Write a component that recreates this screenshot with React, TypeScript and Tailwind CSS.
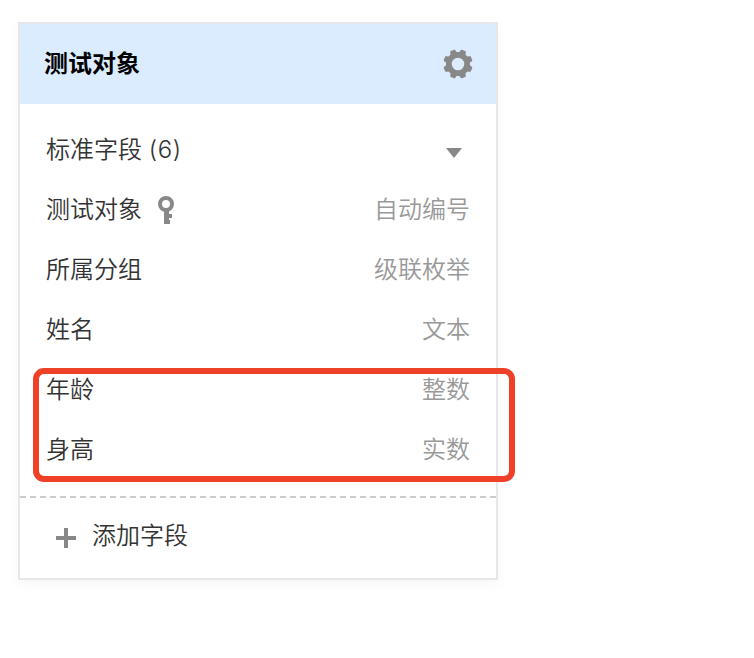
interface Field {
  name: string;
  type: string;
  isKey?: boolean;
}

const fields: Field[] = [
  { name: '测试对象', type: '自动编号', isKey: true },
  { name: '所属分组', type: '级联枚举' },
  { name: '姓名', type: '文本' },
  { name: '年龄', type: '整数' },
  { name: '身高', type: '实数' },
];

function GearIcon() {
  return (
    <svg className="w-[28px] h-[28px] overflow-visible" viewBox="0 0 28 28" fill="none">
      <circle cx="14" cy="14" r="9.1" stroke="#888" strokeWidth="5.6" />
      {[22.5, 67.5, 112.5, 157.5, 202.5, 247.5, 292.5, 337.5].map((angle) => (
        <path
          key={angle}
          d="M9.8 4.2Q11.1 2.4 11.1.6Q11.2-.7 12.4-.7h3.2Q16.8-.7 16.9.6Q16.9 2.4 18.2 4.2z"
          fill="#888"
          transform={`rotate(${angle} 14 14)`}
        />
      ))}
    </svg>
  );
}

function KeyIcon() {
  return (
    <svg className="ml-4 w-[16px] h-[28px]" viewBox="0 0 16 28" fill="none">
      <circle cx="8" cy="8" r="6" stroke="#888" strokeWidth="4" />
      <path d="M6 14h5v4h3v4h-3v2h1v4H6z" fill="#888" />
    </svg>
  );
}

export default function App() {
  return (
    <div className="w-full h-[658px] bg-white pt-[22px] pl-[18px] font-['Inter','Noto_Sans_CJK_SC',sans-serif] text-2xl text-[#333]">
      <div className="relative w-[480px] h-[558px] flex flex-col border-2 border-[#e6e7eb] bg-white shadow-[0_4px_12px_rgba(0,0,0,0.04)]">
        <div className="h-20 px-6 flex items-center justify-between bg-[#dbecff]">
          <h2 className="font-semibold text-black">测试对象</h2>
          <GearIcon />
        </div>

        <div className="pt-4 px-[26px] font-[350]">
          <div className="h-[60px] flex items-center justify-between">
            <span>
              标准字段 <span className="tracking-[0.6px]">(6)</span>
            </span>
            <svg className="w-4 h-[10px] mr-2 mt-1.5" viewBox="0 0 16 10" fill="#888">
              <path d="M0 0h16L8 10z" />
            </svg>
          </div>
          {fields.map((field) => (
            <div key={field.name} className="h-[60px] flex items-center justify-between">
              <span className="flex items-center">
                {field.name}
                {field.isKey && <KeyIcon />}
              </span>
              <span className="text-[#999]">{field.type}</span>
            </div>
          ))}
        </div>

        <div className="mt-4 h-0.5 bg-[repeating-linear-gradient(90deg,#ccc_0_6px,transparent_6px_10px)]" />
        <button className="flex-1 pl-9 flex items-center font-[350] text-left">
          <svg className="w-5 h-5 mr-4" viewBox="0 0 20 20" stroke="#888" strokeWidth="4">
            <path d="M10 0v20M0 10h20" />
          </svg>
          <span className="pb-1">添加字段</span>
        </button>

        {/* Highlight around the numeric fields */}
        <div className="absolute left-[13px] top-[344px] w-[482px] h-[114px] rounded-[11px] border-[6px] border-[#ee4128] pointer-events-none" />
      </div>
    </div>
  );
}
